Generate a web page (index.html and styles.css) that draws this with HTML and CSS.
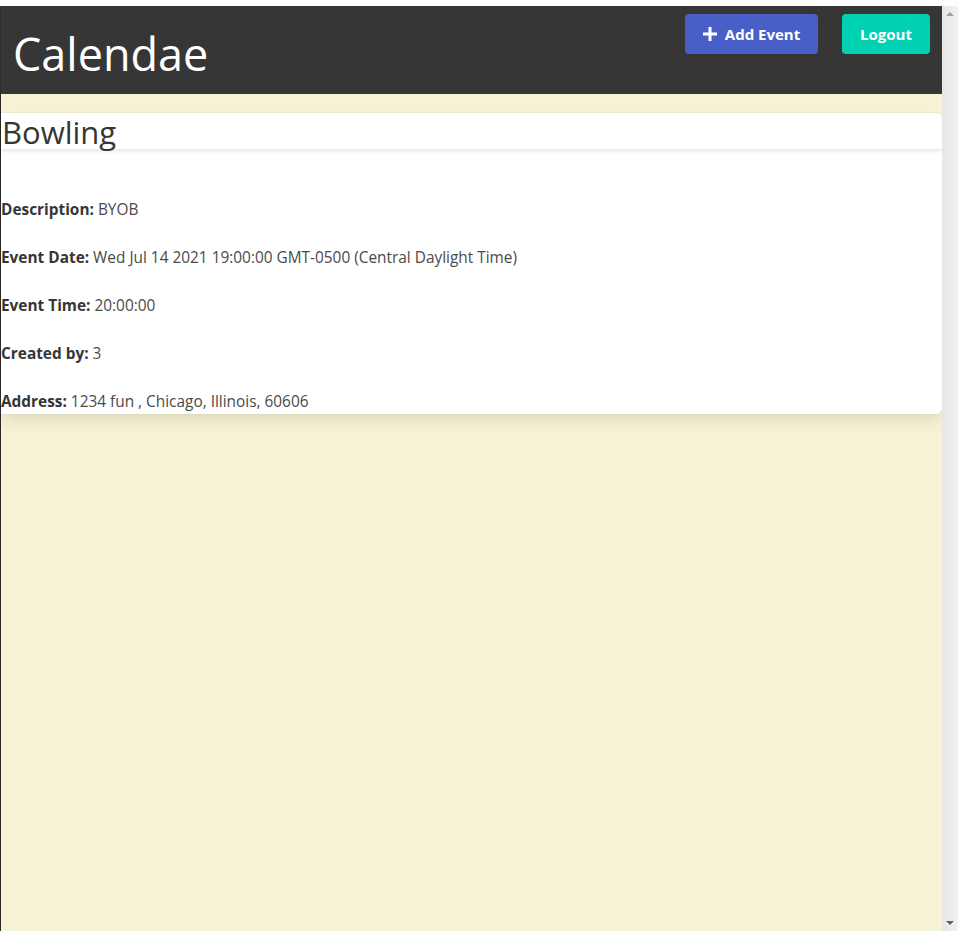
FILE: index.html
```html
<!DOCTYPE html>
<html>
<head>
<meta charset="utf-8">
<link rel="stylesheet" href="styles.css">
</head>
<body>
<div class="topstrip"></div>
<div class="window">
  <div class="page">
    <header class="navbar">
      <h1 class="brand">Calendae</h1>
      <div class="actions">
        <button class="btn btn-add"><svg class="plus" viewBox="0 0 14 14" width="14" height="14"><path d="M5.5 0h3v5.5H14v3H8.5V14h-3V8.5H0v-3h5.5z" fill="#fff"/></svg>Add Event</button>
        <button class="btn btn-logout">Logout</button>
      </div>
    </header>
    <main class="content">
      <section class="card">
        <div class="card-header"><h2 class="card-title">Bowling</h2></div>
        <div class="card-body">
          <p><strong>Description:</strong> BYOB</p>
          <p><strong>Event Date:</strong> Wed Jul 14 2021 19:00:00 GMT-0500 (Central Daylight Time)</p>
          <p><strong>Event Time:</strong> 20:00:00</p>
          <p><strong>Created by:</strong> 3</p>
          <p><strong>Address:</strong> 1234 fun , Chicago, Illinois, 60606</p>
        </div>
      </section>
    </main>
  </div>
  <div class="scrollbar">
    <div class="arrow arrow-up"></div>
    <div class="track"></div>
    <div class="arrow arrow-down"></div>
  </div>
</div>
</body>
</html>
```
FILE: styles.css
```css
* { box-sizing: border-box; }
html, body { margin: 0; padding: 0; height: 100%; }
body {
  font-family: "Open Sans", "Noto Sans", sans-serif;
  background: #fff;
  display: flex;
  flex-direction: column;
  overflow: hidden;
}
.topstrip { height: 6px; background: #fff; flex: none; }
.window { flex: 1; display: flex; min-height: 0; }
.page {
  flex: 1;
  background: #f6f2d5;
  border-left: 1px solid #2b2b2b;
  display: flex;
  flex-direction: column;
}
.navbar {
  height: 88px;
  background: #363636;
  display: flex;
  justify-content: space-between;
  align-items: flex-start;
}
.brand {
  margin: 0;
  padding: 21px 0 0 12px;
  color: #fff;
  font-weight: 400;
  font-size: 45px;
  line-height: 54px;
}
.actions { display: flex; gap: 24px; padding: 8px 12px 0 0; }
.btn {
  height: 40px;
  border: none;
  border-radius: 4px;
  color: #fff;
  font-family: inherit;
  font-weight: 700;
  font-size: 15px;
  display: flex;
  align-items: center;
  justify-content: center;
  cursor: pointer;
}
.btn-add { width: 133px; background: #485fc7; gap: 8px; }
.btn-logout { width: 88px; background: #00d1b2; }
.plus { display: block; }
.content { padding-top: 19px; }
.card {
  background: #fff;
  border-radius: 0 6px 6px 0;
  box-shadow: 0 8px 16px -2px rgba(10,10,10,.1), 0 0 0 1px rgba(10,10,10,.02);
  color: #4a4a4a;
}
.card-header {
  height: 36px;
  box-shadow: 0 2px 4px rgba(10,10,10,.1);
}
.card-title {
  margin: 0;
  padding-left: 1px;
  font-size: 31px;
  line-height: 38px;
  font-weight: 500;
  color: #363636;
}
.card-body { padding-top: 49px; font-size: 15.4px; }
.card-body p { margin: 0 0 24px; line-height: 24px; }
.card-body p:last-child { margin-bottom: 0; }
.card-body strong { color: #363636; font-weight: 700; }
.scrollbar {
  width: 16px;
  flex: none;
  background: linear-gradient(to right, #e6e6e6, #f2f2f2);
  display: flex;
  flex-direction: column;
  align-items: center;
}
.track { flex: 1; }
.arrow { width: 0; height: 0; border-left: 4px solid transparent; border-right: 4px solid transparent; margin: 6px 0; }
.arrow-up { border-bottom: 4px solid #a0a0a0; }
.arrow-down { border-top: 4px solid #606060; }
```
